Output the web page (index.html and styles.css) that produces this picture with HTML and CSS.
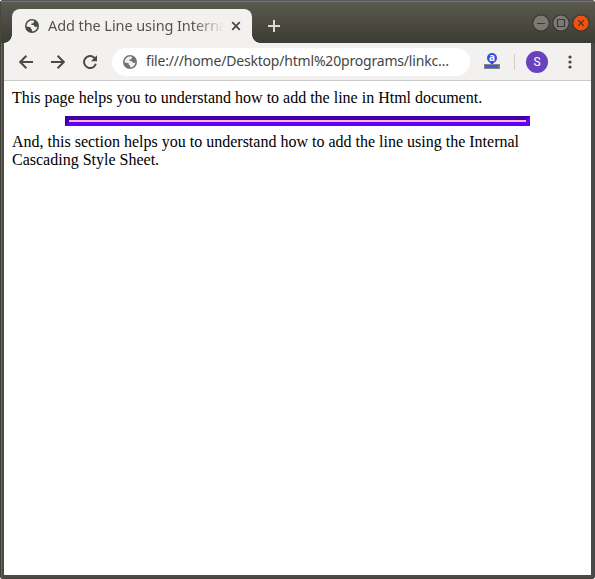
FILE: index.html
```html
<!DOCTYPE html>
<html lang="en">
<head>
<meta charset="utf-8">
<title>Add the Line using Internal CSS</title>
<link rel="stylesheet" href="styles.css">
</head>
<body>
<svg class="defs" aria-hidden="true">
  <symbol id="globe" viewBox="0 0 14 14">
    <circle cx="7" cy="7" r="7" fill="currentColor"/>
    <path class="land" d="M6.2 1.6H8.6L9.1 2.4L8.2 4.2L6.5 4.6L6.3 6.1H8.7L9.5 7.6L11 8L12.3 7.4C12.2 10 10 12.3 7.2 12.4L7 10.6L5.9 9.9L5.7 8.2L1.6 7.4C1.5 4.4 3.6 2 6.2 1.6Z"/>
  </symbol>
</svg>
<div class="window">
  <header class="tabs">
    <div class="tab">
      <svg class="globe" width="14" height="14"><use href="#globe"/></svg>
      <span class="title">Add the Line using Interna</span>
      <svg class="close" width="10" height="10" viewBox="0 0 10 10"><path d="M1.2 1.2L8.8 8.8M8.8 1.2L1.2 8.8"/></svg>
    </div>
    <svg class="plus" width="12" height="12" viewBox="0 0 12 12"><path d="M6 0V12M0 6H12"/></svg>
    <div class="controls">
      <svg width="18" height="18" viewBox="0 0 18 18"><circle cx="9" cy="9" r="8.2"/><path d="M5 9.5H13"/></svg>
      <svg width="18" height="18" viewBox="0 0 18 18"><circle cx="9" cy="9" r="8.2"/><path d="M5.5 5.5H12.5V12.5H5.5Z"/></svg>
      <svg class="quit" width="18" height="18" viewBox="0 0 18 18"><circle cx="9" cy="9" r="8.2"/><path d="M6.2 6.2L11.8 11.8M11.8 6.2L6.2 11.8"/></svg>
    </div>
  </header>
  <nav class="toolbar">
    <svg class="nav" width="14" height="14" viewBox="0 0 14 14"><path d="M14 7H1.5M7.4 .8L1.2 7L7.4 13.2"/></svg>
    <svg class="nav" width="14" height="14" viewBox="0 0 14 14"><path d="M0 7H12.5M6.6 .8L12.8 7L6.6 13.2"/></svg>
    <svg class="nav" width="14" height="14" viewBox="0 0 14 14"><path d="M12.8 8.8A6 6 0 1 1 11.2 2.7L12.5 4"/><path class="head" d="M14 .2V6.3H7.9Z"/></svg>
    <div class="address">
      <svg class="globe" width="14" height="14"><use href="#globe"/></svg>
      <span class="url">file:///home/Desktop/html%20programs/linkc…</span>
    </div>
    <svg class="extension" width="16" height="17" viewBox="0 0 16 17">
      <path d="M4.5 8L8 12L11.5 8Z" fill="#2e4eea"/>
      <circle cx="8" cy="5" r="5" fill="#2e4eea"/>
      <rect y="11" width="16" height="5" fill="#858585"/>
      <rect x="1" y="12" width="13.5" height="3" fill="#3f59dc"/>
      <text x="8" y="7.8">a</text>
    </svg>
    <i class="separator"></i>
    <span class="avatar">S</span>
    <svg class="menu" width="4" height="14" viewBox="0 0 4 14"><circle cx="2" cy="2" r="1.6"/><circle cx="2" cy="7" r="1.6"/><circle cx="2" cy="12" r="1.6"/></svg>
  </nav>
  <main class="page">
    This page helps you to understand how to add the line in Html document.
    <hr>
    And, this section helps you to understand how to add the line using the Internal Cascading Style Sheet.
  </main>
</div>
</body>
</html>
```
FILE: styles.css
```css
* { box-sizing: border-box; }
body { margin: 0; background: #fff; }
.defs { position: absolute; width: 0; height: 0; }
.window {
  display: flex; flex-direction: column; height: 579px;
  padding: 0 4px 4px; overflow: hidden; border-radius: 4px;
  background: #4b4b43;
  box-shadow: inset 1px 0 #3f3f38, inset 2px 0 #68685c, inset 0 -1px #404038, inset -1px 0 #444;
}
.tabs {
  flex: none; display: flex; height: 43px; margin: 0 -4px; padding: 9px 5px 0 11px;
  background: linear-gradient(#55565c 0 1px, #77776d 1px 2px, #59594e 2px, #3c3c36 43px);
  border-left: 1px solid #47483f;
}
.tab {
  position: relative; display: flex; align-items: center; width: 240px; height: 34px;
  padding: 0 11px 0 13px; background: #f2f1f0; border-radius: 8px 8px 0 0; color: #4a4a4a;
}
.tab::before, .tab::after { content: ""; position: absolute; bottom: 0; width: 8px; height: 8px; }
.tab::before { left: -8px; background: radial-gradient(circle at 0 0, transparent 7.5px, #f2f1f0 8px); }
.tab::after { right: -8px; background: radial-gradient(circle at 100% 0, transparent 7.5px, #f2f1f0 8px); }
.globe { flex: none; }
.land { fill: #f2f1f0; }
.title {
  width: 176px; margin: -2px 0 0 9px; overflow: hidden; white-space: nowrap;
  font: 14.5px/20px "Noto Sans", sans-serif; letter-spacing: -0.08px; color: #55534f;
  -webkit-mask-image: linear-gradient(90deg, #000 145px, transparent 176px);
  mask-image: linear-gradient(90deg, #000 145px, transparent 176px);
}
.close { margin-left: auto; fill: none; stroke: #4a4a47; stroke-width: 1.8; }
.plus { margin: 11px 0 0 16px; stroke: #dedbcc; stroke-width: 2; }
.controls { display: flex; gap: 2px; margin: 5px 0 0 auto; }
.controls svg { fill: #7b7b73; stroke: #393933; stroke-width: 1.2; }
.controls .quit { fill: #f4500f; }
.toolbar {
  flex: none; display: flex; align-items: center; height: 38px; padding-left: 15px;
  background: #f2f1f0; border-bottom: 1px solid #c9c9c8;
}
.nav { flex: none; margin-right: 18px; fill: none; stroke: #4a4a47; stroke-width: 2; }
.nav .head { fill: #4a4a47; stroke: none; }
.address {
  display: flex; align-items: center; width: 358px; height: 28px; margin-left: -3px;
  padding-left: 11px; background: #fff; border-radius: 14px; color: #737373;
}
.address .globe { margin-right: 9px; }
.url { margin-top: -1px; font: 14px/20px "Noto Sans", sans-serif; letter-spacing: -0.19px; white-space: nowrap; color: #454542; }
.extension { margin-left: 14px; overflow: visible; }
.extension text { font: bold 10px "Open Sans", sans-serif; fill: #fff; text-anchor: middle; }
.separator { width: 1px; height: 16px; margin-left: 14px; background: #cdcdcb; }
.avatar {
  width: 22px; height: 22px; margin-left: 11px; border-radius: 50%;
  background: #6842bd; color: #fff; font: 12px/22px Roboto, sans-serif; text-align: center;
}
.menu { margin-left: 20px; fill: #454545; }
.page {
  flex: 1; padding: 8px; background: #fff; color: #000;
  font: 16px/18px "Liberation Serif", serif;
}
.page hr {
  width: 465px; height: 10px; margin: 9px auto 7px; background: #ffb6c1;
  border: 4px solid; border-color: #4000a9 #6200ff #6200ff #4000a9;
}
```
